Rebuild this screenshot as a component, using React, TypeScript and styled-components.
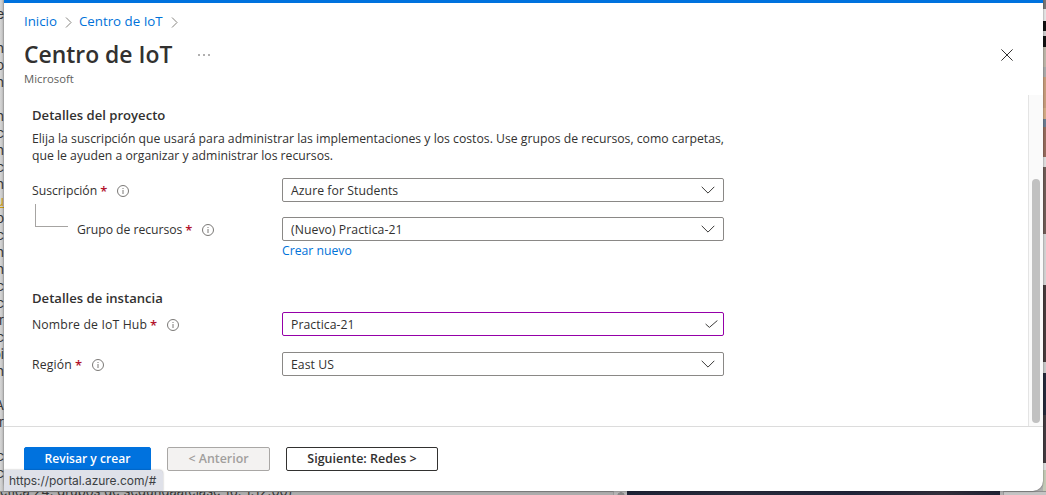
import React from 'react';
import styled, { createGlobalStyle } from 'styled-components';

const GlobalStyle = createGlobalStyle`
  * { box-sizing: border-box; }
  html, body { margin: 0; padding: 0; overflow: hidden; }
  body { font-family: 'Open Sans', 'Noto Sans', sans-serif; font-size: 12.22px; color: #323130; }
`;

/* ---------- desktop behind the window ---------- */

const Desktop = styled.div`
  position: relative;
  width: 1046px;
  height: 495px;
  overflow: hidden;
  background: #b0b0b0;
`;

const Backdrop = styled.div`
  display: flex;
  justify-content: space-between;
  height: 491px;
`;

const DocumentEdge = styled.div`
  display: flex;
  flex-direction: column;
  width: 4px;
  padding-top: 6px;
  background: linear-gradient(90deg, #d6d6d6, #bcbcbc);
  font: 13px/17px Inter, sans-serif;
  color: #333;
  overflow: hidden;
`;

const Fragment = styled.span<{ $gold?: boolean }>`
  height: 17px;
  flex: none;
  direction: rtl;
  white-space: nowrap;
  color: ${(p) => (p.$gold ? '#c99a10' : '#333')};
  text-decoration: ${(p) => (p.$gold ? 'underline' : 'none')};
`;

const PhotoEdge = styled.div`
  width: 3px;
  background: linear-gradient(
    180deg,
    #777 0 9px, #e4e4e4 9px 21px, #111 21px 31px, #ccc 31px 36px, #111 36px 47px,
    #bcb5a8 47px 67px, #aaa 67px 77px, #c69c7c 77px 108px, #d2aa85 108px 119px,
    #6c7c90 119px 127px, #946b5d 127px 157px, #ddd 157px 167px, #6f5c57 167px 234px,
    #d2d2d2 234px 285px, #463b3c 285px 362px, #c8c8c8 362px 373px,
    #262a3a 373px 415px, #423b40 415px 463px, #ddd 463px 470px, #c3cab5 470px 491px
  );
`;

const BottomEdge = styled.div`
  display: flex;
  height: 4px;
  overflow: hidden;
`;

const DocumentLine = styled.div`
  width: 613px;
  height: 4px;
  border-top: 1px solid #8f8f8f;
  background: #acacac;
  font: 13px/16px Inter, sans-serif;
  color: #333;
  white-space: pre;
  overflow: hidden;
`;

const LineText = styled.span`
  display: block;
  margin-top: -9px;
  letter-spacing: 0.03px;
`;

const ScrollEdge = styled.div`
  width: 14px;
  border-left: 1px solid #999;
  background: radial-gradient(circle at 7px 5px, #858585 3.5px, #b4b4b4 4px);
`;

const PhotoBottom = styled.div`
  width: 373px;
  background: linear-gradient(90deg, #1e2336, #292c3c 30%, #20253a 60%, #332f3b 85%, #1f2335);
`;

const CornerEdge = styled.div`
  flex: 1;
  margin-left: 3px;
  border-top: 1px solid #8f8f8f;
  border-left: 1px solid #999;
  background: #c4c4c4;
`;

/* ---------- window ---------- */

const Window = styled.main`
  position: absolute;
  left: 4px;
  top: 0;
  display: flex;
  flex-direction: column;
  width: 1039px;
  height: 491px;
  background: #fff;
  border-top: 3px solid #0072de;
  border-radius: 0 0 10px 10px;
  box-shadow: 0 0 2px rgba(0, 0, 0, 0.55);
  overflow: hidden;
`;

const Header = styled.header`
  display: flex;
  justify-content: space-between;
  height: 92px;
  padding: 9px 30px 0 20px;
`;

const Breadcrumb = styled.nav`
  display: flex;
  align-items: center;
  height: 19px;
  font-size: 13.3px;
`;

const Crumb = styled.a`
  color: #0072d9;
  line-height: 19px;
  white-space: nowrap;
`;

const CrumbArrow = styled.svg`
  width: 7px;
  height: 11px;
  margin: 1px 7px 0 8px;
  fill: none;
  stroke: #85837f;
  stroke-width: 1;
`;

const TitleRow = styled.div`
  display: flex;
  align-items: center;
  height: 30px;
  margin-top: 8px;
`;

const Title = styled.h1`
  margin: 2px 0 0;
  font-size: 22.9px;
  font-weight: 600;
  line-height: 30px;
  white-space: nowrap;
`;

const MoreDots = styled.svg`
  width: 12px;
  height: 2px;
  margin: 2px 0 0 26px;
  fill: #4f4d4b;
`;

const Publisher = styled.div`
  margin-top: 2px;
  font-size: 11.3px;
  line-height: 16px;
  color: #605e5c;
`;

const CloseIcon = styled.svg`
  width: 12px;
  height: 12px;
  margin: 37px 0 0;
  stroke: #323130;
  stroke-width: 1;
`;

const Content = styled.div`
  display: flex;
  justify-content: space-between;
  height: 331px;
`;

const Form = styled.section`
  display: flex;
  flex-direction: column;
  width: 720px;
  padding: 11px 0 0 28px;
`;

const SectionTitle = styled.h2`
  margin: 0;
  font-size: 13.1px;
  font-weight: 600;
  line-height: 18px;
`;

const Description = styled.p`
  margin: 6px 0 0;
  line-height: 17px;
  white-space: nowrap;
`;

const Field = styled.div<{ $top: number }>`
  display: flex;
  justify-content: space-between;
  align-items: center;
  height: 24px;
  margin-top: ${(p) => p.$top}px;
`;

const Label = styled.label<{ $nested?: boolean; $tracking?: number }>`
  display: flex;
  align-items: center;
  height: 24px;
  padding-top: 2px;
  line-height: 22px;
  margin-left: ${(p) => (p.$nested ? 9 : 0)}px;
  letter-spacing: ${(p) => p.$tracking ?? 0}px;
  white-space: nowrap;
`;

const LabelGroup = styled.div`
  display: flex;
  align-items: center;
`;

const Branch = styled.div`
  width: 33px;
  height: 23px;
  margin: -27px 0 0 3px;
  border: solid #a6a4a2;
  border-width: 0 0 1px 1px;
`;

const Asterisk = styled.span`
  margin-left: 3px;
  color: #b3122b;
  font-size: 13px;
  font-weight: 600;
`;

const InfoIcon = styled.svg`
  width: 12px;
  height: 12px;
  margin: 0 0 0 10px;
  fill: none;
  stroke: #6b6967;
  stroke-width: 0.9;
`;

const Box = styled.div<{ $active?: boolean }>`
  display: flex;
  justify-content: space-between;
  align-items: center;
  width: 442px;
  height: 24px;
  padding: 0 ${(p) => (p.$active ? 5 : 8)}px 0 8px;
  border: 1px solid ${(p) => (p.$active ? '#9500a8' : '#8a8886')};
  border-radius: 2px;
  line-height: 20px;
`;

const Value = styled.span`
  padding-top: 2px;
  letter-spacing: 0.06px;
`;

const BoxIcon = styled.svg`
  height: 8px;
  fill: none;
  stroke: #3b3a39;
  stroke-width: 1;
`;

const CreateLink = styled.a`
  margin: 1px 0 0 250px;
  line-height: 18px;
  color: #0072d9;
`;

const InstanceTitle = styled(SectionTitle)`
  margin-top: 29px;
`;

const ScrollTrack = styled.div`
  width: 15px;
  padding: 84px 3px 0;
  border-left: 1px solid #e4e4e4;
  background: #fafafa;
`;

const ScrollThumb = styled.div`
  width: 8px;
  height: 244px;
  border-radius: 4px;
  background: #c1c1c1;
`;

const Footer = styled.footer`
  display: flex;
  gap: 16px;
  flex: 1;
  padding: 20px 0 0 20px;
  border-top: 1px solid #dcdcdc;
`;

const tones = {
  primary: { bg: '#0072de', fg: '#fff', line: '#0072de', size: 12.1 },
  disabled: { bg: '#f3f2f1', fg: '#a19f9d', line: '#a9a7a5', size: 12.4 },
  plain: { bg: '#fff', fg: '#323130', line: '#323130', size: 12.5 },
};

const Button = styled.button<{ $tone: keyof typeof tones; $width: number }>`
  width: ${(p) => p.$width}px;
  height: 24px;
  padding: 0;
  border: 1px solid ${(p) => tones[p.$tone].line};
  border-radius: 2px;
  background: ${(p) => tones[p.$tone].bg};
  color: ${(p) => tones[p.$tone].fg};
  font: 600 ${(p) => tones[p.$tone].size}px/20px 'Open Sans', sans-serif;
  white-space: nowrap;
`;

const StatusBubble = styled.div`
  position: absolute;
  left: 4px;
  top: 470px;
  width: 159px;
  height: 21px;
  padding-left: 5px;
  border-radius: 0 4px 0 0;
  background: #dfe1e9;
  box-shadow: 0 0 2px rgba(0, 0, 0, 0.35);
  font: 12px/21px Inter, sans-serif;
  letter-spacing: -0.05px;
  color: #3c3f43;
`;

const fragments = [
  'e', '', 'n', 'lo', 'n', '', 'n', 'c', 'n', 'sc', 'n', 'u', 'o', 'c', 'n', 'n', 'c', 'c',
  'ur', 'c', 'pi', 'n', '', 'A', 'or', '', 'c', 'c',
];

const BreadcrumbArrow = () => (
  <CrumbArrow viewBox="0 0 7 11">
    <path d="M1 .5 6 5.5 1 10.5" />
  </CrumbArrow>
);

const FieldLabel = ({ text, nested, tracking }: { text: string; nested?: boolean; tracking?: number }) => (
  <Label $nested={nested} $tracking={tracking}>
    {text}
    <Asterisk>*</Asterisk>
    <InfoIcon viewBox="0 0 12 12">
      <circle cx="6" cy="6" r="5.5" />
      <path d="M6 5v4M6 3v1" />
    </InfoIcon>
  </Label>
);

const Dropdown = ({ value }: { value: string }) => (
  <Box>
    <Value>{value}</Value>
    <BoxIcon width="14" viewBox="0 0 14 8">
      <path d="M.7.8 7 7.1 13.3.8" />
    </BoxIcon>
  </Box>
);

export default function App() {
  return (
    <>
      <GlobalStyle />
      <Desktop>
        <Backdrop>
          <DocumentEdge>
            {fragments.map((text, i) => (
              <Fragment key={i} $gold={text === 'u'}>{text}</Fragment>
            ))}
          </DocumentEdge>
          <PhotoEdge />
        </Backdrop>
        <BottomEdge>
          <DocumentLine>
            <LineText>ctica 24: grupos de segundaatclase 16: 1:12:00)</LineText>
          </DocumentLine>
          <ScrollEdge />
          <PhotoBottom />
          <CornerEdge />
        </BottomEdge>

        <Window>
          <Header>
            <div>
              <Breadcrumb>
                <Crumb>Inicio</Crumb>
                <BreadcrumbArrow />
                <Crumb>Centro de IoT</Crumb>
                <BreadcrumbArrow />
              </Breadcrumb>
              <TitleRow>
                <Title>Centro de IoT</Title>
                <MoreDots viewBox="0 0 12 2">
                  <circle cx="1" cy="1" r=".8" />
                  <circle cx="6" cy="1" r=".8" />
                  <circle cx="11" cy="1" r=".8" />
                </MoreDots>
              </TitleRow>
              <Publisher>Microsoft</Publisher>
            </div>
            <CloseIcon viewBox="0 0 12 12">
              <path d="M.4.4 11.6 11.6M11.6.4.4 11.6" />
            </CloseIcon>
          </Header>

          <Content>
            <Form>
              <SectionTitle>Detalles del proyecto</SectionTitle>
              <Description>
                Elija la suscripción que usará para administrar las implementaciones y los costos. Use grupos de recursos, como carpetas,
                <br />
                que le ayuden a organizar y administrar los recursos.
              </Description>
              <Field $top={14}>
                <FieldLabel text="Suscripción" />
                <Dropdown value="Azure for Students" />
              </Field>
              <Field $top={15}>
                <LabelGroup>
                  <Branch />
                  <FieldLabel text="Grupo de recursos" nested tracking={-0.05} />
                </LabelGroup>
                <Dropdown value="(Nuevo) Practica-21" />
              </Field>
              <CreateLink>Crear nuevo</CreateLink>
              <InstanceTitle>Detalles de instancia</InstanceTitle>
              <Field $top={5}>
                <FieldLabel text="Nombre de IoT Hub" tracking={0.15} />
                <Box $active>
                  <Value>Practica-21</Value>
                  <BoxIcon width="13" viewBox="0 0 13 8">
                    <path d="M.6 4 4.4 7.4 12.4.5" />
                  </BoxIcon>
                </Box>
              </Field>
              <Field $top={16}>
                <FieldLabel text="Región" tracking={0.15} />
                <Dropdown value="East US" />
              </Field>
            </Form>
            <ScrollTrack>
              <ScrollThumb />
            </ScrollTrack>
          </Content>

          <Footer>
            <Button $tone="primary" $width={127}>Revisar y crear</Button>
            <Button $tone="disabled" $width={103}>&lt; Anterior</Button>
            <Button $tone="plain" $width={152}>Siguiente: Redes &gt;</Button>
          </Footer>
        </Window>
        <StatusBubble>https://portal.azure.com/#</StatusBubble>
      </Desktop>
    </>
  );
}
